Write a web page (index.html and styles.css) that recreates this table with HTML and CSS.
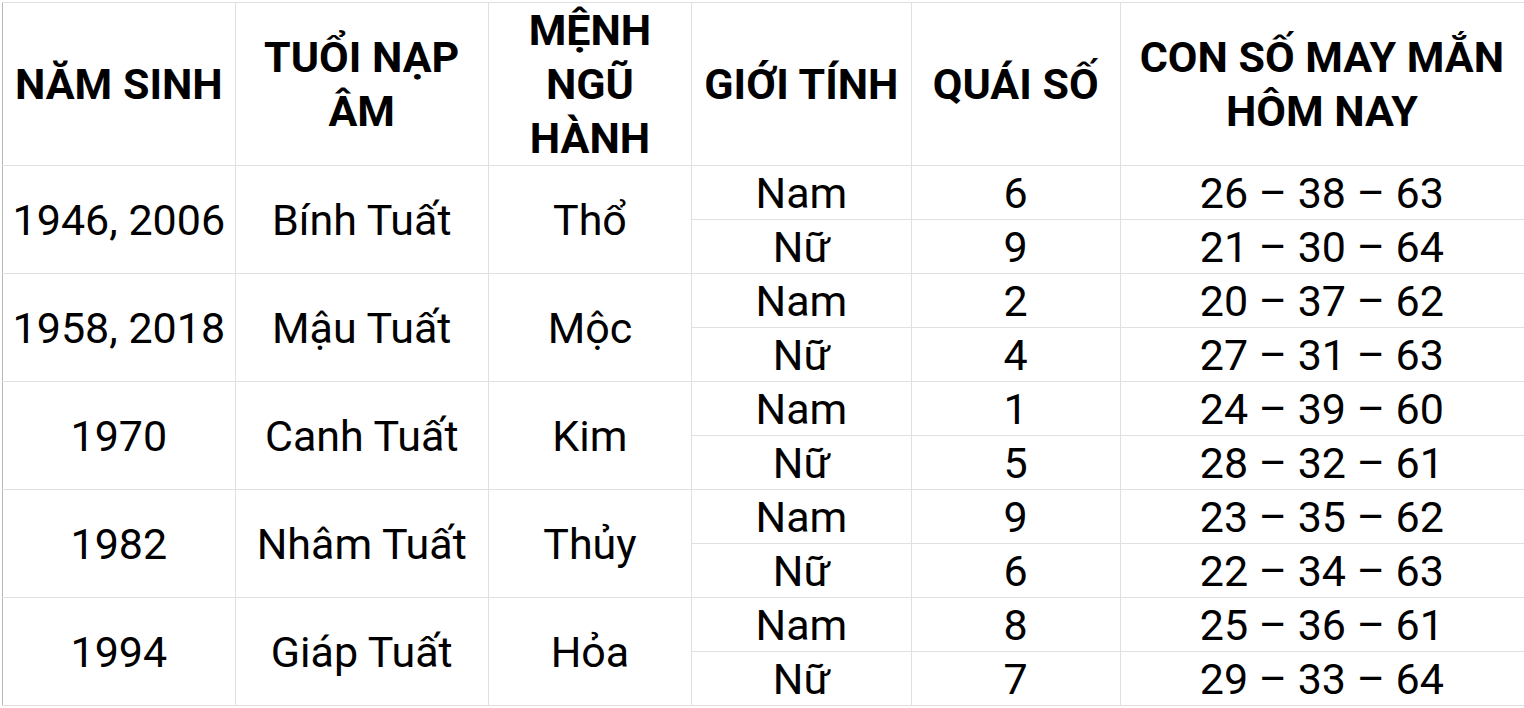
FILE: index.html
```html
<!DOCTYPE html>
<html lang="vi">
<head>
<meta charset="utf-8">
<link rel="stylesheet" href="styles.css">
</head>
<body>
<table class="sheet">
  <colgroup>
    <col class="c1"><col class="c2"><col class="c3"><col class="c4"><col class="c5"><col class="c6">
  </colgroup>
  <thead>
    <tr class="head">
      <th>NĂM SINH</th>
      <th>TUỔI NẠP<br>ÂM</th>
      <th>MỆNH<br>NGŨ<br>HÀNH</th>
      <th>GIỚI TÍNH</th>
      <th>QUÁI SỐ</th>
      <th>CON SỐ MAY MẮN<br>HÔM NAY</th>
    </tr>
  </thead>
  <tbody>
    <tr><td rowspan="2">1946, 2006</td><td rowspan="2">Bính Tuất</td><td rowspan="2">Thổ</td><td>Nam</td><td>6</td><td>26 – 38 – 63</td></tr>
    <tr><td>Nữ</td><td>9</td><td>21 – 30 – 64</td></tr>
    <tr><td rowspan="2">1958, 2018</td><td rowspan="2">Mậu Tuất</td><td rowspan="2">Mộc</td><td>Nam</td><td>2</td><td>20 – 37 – 62</td></tr>
    <tr><td>Nữ</td><td>4</td><td>27 – 31 – 63</td></tr>
    <tr><td rowspan="2">1970</td><td rowspan="2">Canh Tuất</td><td rowspan="2">Kim</td><td>Nam</td><td>1</td><td>24 – 39 – 60</td></tr>
    <tr><td>Nữ</td><td>5</td><td>28 – 32 – 61</td></tr>
    <tr><td rowspan="2">1982</td><td rowspan="2">Nhâm Tuất</td><td rowspan="2">Thủy</td><td>Nam</td><td>9</td><td>23 – 35 – 62</td></tr>
    <tr><td>Nữ</td><td>6</td><td>22 – 34 – 63</td></tr>
    <tr><td rowspan="2">1994</td><td rowspan="2">Giáp Tuất</td><td rowspan="2">Hỏa</td><td>Nam</td><td>8</td><td>25 – 36 – 61</td></tr>
    <tr><td>Nữ</td><td>7</td><td>29 – 33 – 64</td></tr>
  </tbody>
</table>
</body>
</html>
```
FILE: styles.css
```css
html, body {
  margin: 0;
  padding: 0;
  background: #ffffff;
  overflow: hidden;
}
.sheet {
  margin: 2px 0 0 2px;
  border-collapse: collapse;
  table-layout: fixed;
  font-family: Roboto, "Liberation Sans", sans-serif;
  color: #000000;
  font-size: 43px;
}
.c1 { width: 233px; }
.c2 { width: 254px; }
.c3 { width: 205px; }
.c4 { width: 220px; }
.c5 { width: 210px; }
.c6 { width: 404px; }
.sheet th,
.sheet td {
  border: 1px solid #e0e0e0;
  padding: 0 2px;
  text-align: center;
  vertical-align: middle;
  white-space: nowrap;
  overflow: hidden;
}
.sheet th {
  font-weight: 700;
  line-height: 54px;
  height: 162px;
}
.sheet td {
  font-weight: 400;
  line-height: 48px;
  height: 53px;
}
.sheet tr > :first-child {
  border-left-color: #b7b7b7;
}
.sheet tr > :last-child {
  border-right-color: transparent;
}
```
